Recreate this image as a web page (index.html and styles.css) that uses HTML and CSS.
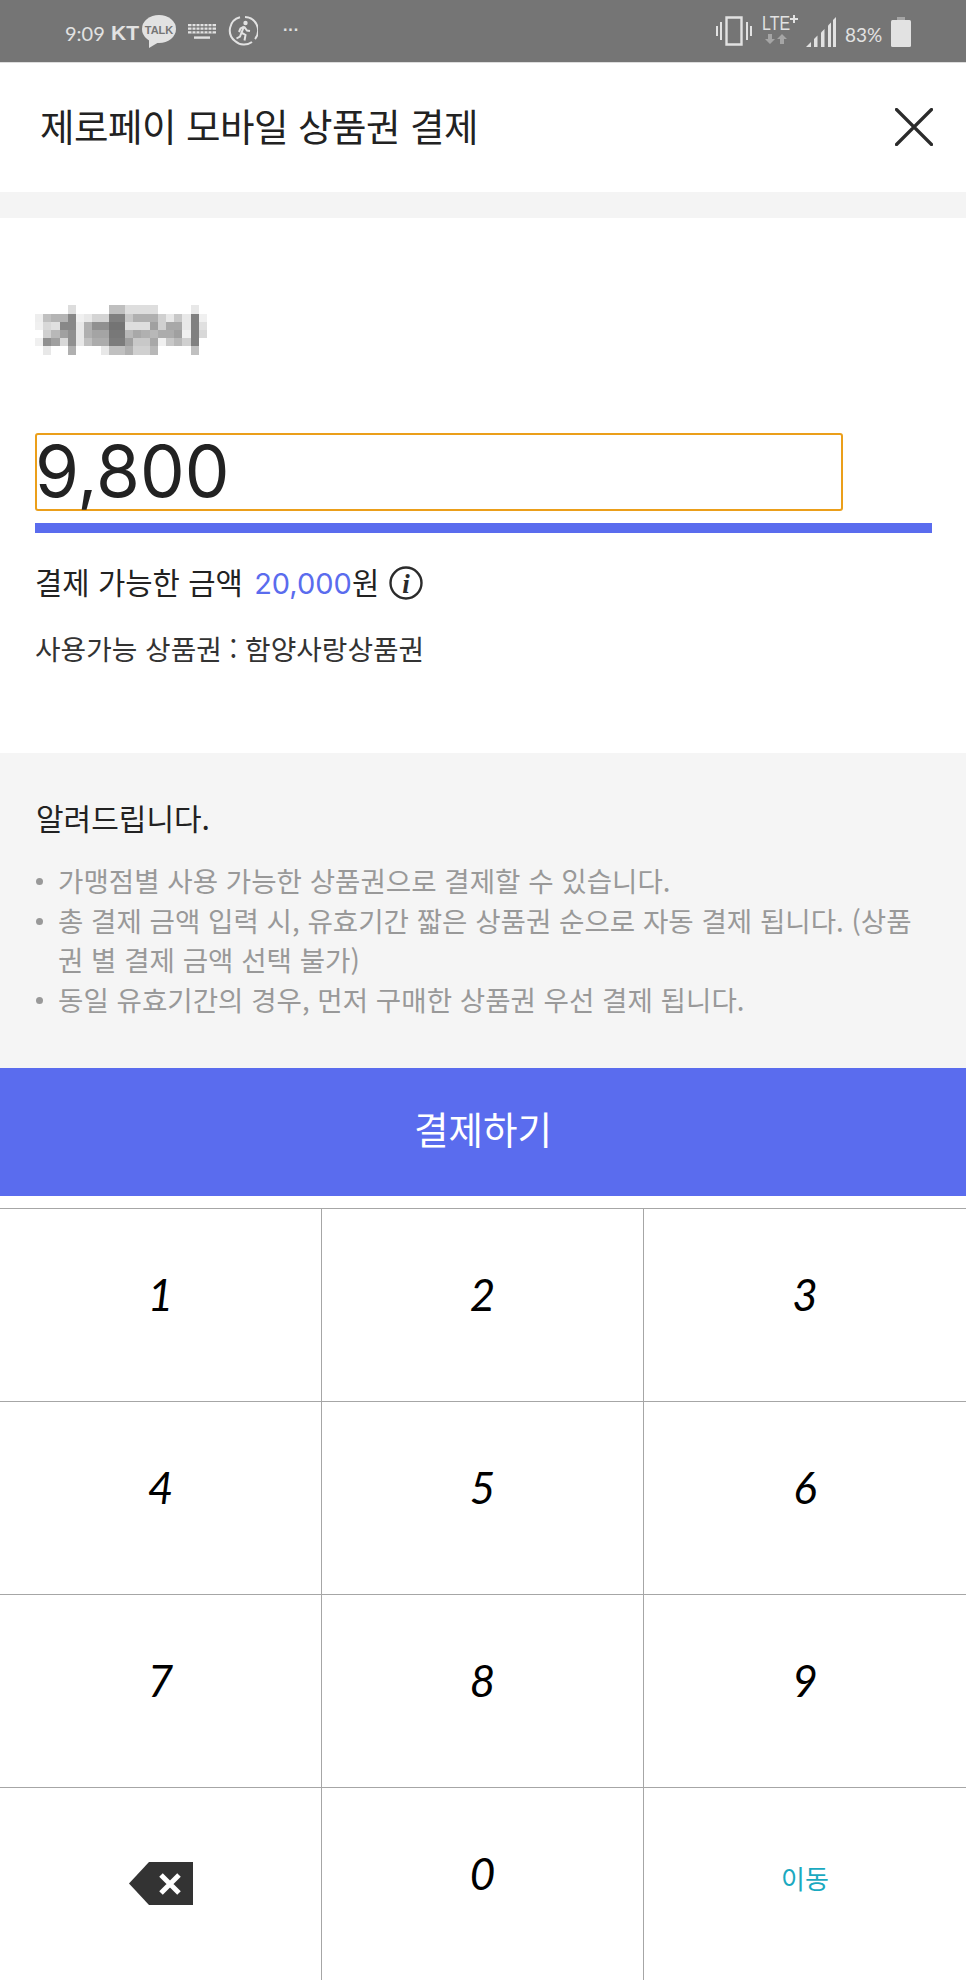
FILE: index.html
```html
<!DOCTYPE html>
<html lang="ko">

<head>
    <meta charset="utf-8" />
    <title>제로페이 모바일 상품권 결제</title>
    <link rel="stylesheet" href="styles.css">
</head>

<body>
    <div class="status-bar">
        <div class="status-left">
            <span class="status-time">9:09</span>
            <span class="status-carrier">KT</span>
            <svg class="icon-talk" width="34" height="33" viewBox="0 0 34 33">
                <ellipse cx="17" cy="14" rx="17" ry="14" fill="#e2e2e2" />
                <path d="M7 24 L7 33 L17 27 Z" fill="#e2e2e2" />
                <text x="17" y="19" text-anchor="middle" class="talk-text">TALK</text>
            </svg>
            <svg class="icon-keyboard" width="28" height="15" viewBox="0 0 28 15" fill="#e2e2e2">
                <path d="M0 0h28v2.2H0zM0 3.6h28v2.2H0zM0 7.2h28v2.2H0z" />
                <path d="M6 12.4h16v2.4H6z" />
                <path d="M3.5 0h1v9.4h-1zM7.5 0h1v9.4h-1zM11.5 0h1v9.4h-1zM15.5 0h1v9.4h-1zM19.5 0h1v9.4h-1zM23.5 0h1v9.4h-1z" fill="#757575" />
            </svg>
            <svg class="icon-run" width="30" height="31" viewBox="0 0 30 31" fill="none" stroke="#e2e2e2">
                <path d="M17 2 A13.5 13.5 0 0 1 27 24" stroke-width="2" />
                <path d="M24 27 A13.5 13.5 0 0 1 7 26 A13.5 13.5 0 0 1 12 2.3" stroke-width="2" />
                <circle cx="17.500" cy="8" r="2.200" fill="#e2e2e2" stroke="none" />
                <path d="M16 11.500 L13.500 17.500 L17.500 20 L16.500 25.500 M13.500 17.500 L12 21.500 L8.500 23.500 M16 11.500 L19 15.500 L22 16 M16 11.500 L12.500 13.500 L11 17" stroke-width="2" />
            </svg>
            <span class="status-dots">···</span>
        </div>
        <div class="status-right">
            <svg class="icon-vibrate" width="36" height="30" viewBox="0 0 36 30" fill="#e2e2e2">
                <path d="M10.5 1.5h15v27h-15z" fill="none" stroke="#e2e2e2" stroke-width="2.4" />
                <path d="M0 10h2v10H0zM4 6h2v18H4zM30 6h2v18h-2zM34 10h2v10h-2z" />
            </svg>
            <svg class="icon-lte" width="36" height="36" viewBox="0 0 36 36">
                <text x="0" y="20" class="lte-text" textLength="28" lengthAdjust="spacingAndGlyphs">LTE</text>
                <path d="M32 5v8M28 9h8" stroke="#e2e2e2" stroke-width="2" />
                <path d="M6 24h4v5h3l-5 5-5-5h3zM18 34v-5h-3l5-5 5 5h-3v5z" fill="#a5a5a5" />
            </svg>
            <svg class="icon-signal" width="30" height="30" viewBox="0 0 30 30" fill="#e2e2e2">
                <path d="M0 30 L5 25 V30 Z" />
                <path d="M8 22 L11.500 18.500 V30 H8 Z" />
                <path d="M15 15.500 L18.500 12 V30 H15 Z" />
                <path d="M22 8.500 L25 5.500 V30 H22 Z" />
                <path d="M27 3 L30 0 V30 H27 Z" />
            </svg>
            <span class="status-battery">83%</span>
            <svg class="icon-battery" width="20" height="30" viewBox="0 0 20 30">
                <path d="M6 0h8v3H6z" fill="#a5a5a5" />
                <rect x="0" y="3" width="20" height="27" rx="1.500" fill="#e2e2e2" />
            </svg>
        </div>
    </div>

    <div class="header">
        <h1>제로페이 모바일 상품권 결제</h1>
        <svg class="icon-close" width="38" height="38" viewBox="0 0 38 38" stroke="#2b2b2b" stroke-width="3.200" stroke-linecap="round">
            <path d="M1.500 1.500 L36.500 36.500 M36.500 1.500 L1.500 36.500" />
        </svg>
    </div>

    <div class="band"></div>

    <div class="pay-form">
        <!-- 가맹점 이름은 모자이크 처리됨 -->
        <svg class="store-mosaic" width="172" height="50" viewBox="0 0 21 6" shape-rendering="crispEdges">
            <g>
                <rect x="4" y="0" width="1" height="1" fill="#dddddd" />
                <rect x="9" y="0" width="2" height="1" fill="#bfbfbf" />
                <rect x="11" y="0" width="4" height="1" fill="#dedede" />
                <rect x="19" y="0" width="1" height="1" fill="#e8e8e8" />
            </g>
            <g>
                <rect x="0" y="1" width="1" height="1" fill="#eeeeee" />
                <rect x="1" y="1" width="1" height="1" fill="#c0c0c0" />
                <rect x="2" y="1" width="2" height="1" fill="#b4b4b4" />
                <rect x="4" y="1" width="1" height="1" fill="#888888" />
                <rect x="5" y="1" width="1" height="1" fill="#f0f0f0" />
                <rect x="6" y="1" width="1" height="1" fill="#e8e8e8" />
                <rect x="7" y="1" width="2" height="1" fill="#d4d4d4" />
                <rect x="9" y="1" width="2" height="1" fill="#808080" />
                <rect x="11" y="1" width="1" height="1" fill="#c8c8c8" />
                <rect x="12" y="1" width="3" height="1" fill="#b0b0b0" />
                <rect x="15" y="1" width="1" height="1" fill="#d0d0d0" />
                <rect x="16" y="1" width="1" height="1" fill="#e8e8e8" />
                <rect x="17" y="1" width="1" height="1" fill="#c8c8c8" />
                <rect x="18" y="1" width="1" height="1" fill="#e8e8e8" />
                <rect x="19" y="1" width="1" height="1" fill="#808080" />
                <rect x="20" y="1" width="1" height="1" fill="#f0f0f0" />
            </g>
            <g>
                <rect x="0" y="2" width="1" height="1" fill="#f0f0f0" />
                <rect x="1" y="2" width="1" height="1" fill="#d8d8d8" />
                <rect x="2" y="2" width="1" height="1" fill="#e0e0e0" />
                <rect x="3" y="2" width="2" height="1" fill="#888888" />
                <rect x="5" y="2" width="1" height="1" fill="#e8e8e8" />
                <rect x="6" y="2" width="1" height="1" fill="#b0b0b0" />
                <rect x="7" y="2" width="2" height="1" fill="#909090" />
                <rect x="9" y="2" width="2" height="1" fill="#747474" />
                <rect x="11" y="2" width="3" height="1" fill="#dedede" />
                <rect x="14" y="2" width="1" height="1" fill="#a0a0a0" />
                <rect x="15" y="2" width="1" height="1" fill="#d0d0d0" />
                <rect x="16" y="2" width="2" height="1" fill="#a8a8a8" />
                <rect x="18" y="2" width="1" height="1" fill="#e8e8e8" />
                <rect x="19" y="2" width="1" height="1" fill="#808080" />
                <rect x="20" y="2" width="1" height="1" fill="#e0e0e0" />
            </g>
            <g>
                <rect x="1" y="3" width="1" height="1" fill="#d0d0d0" />
                <rect x="2" y="3" width="1" height="1" fill="#b8b8b8" />
                <rect x="3" y="3" width="1" height="1" fill="#a0a0a0" />
                <rect x="4" y="3" width="1" height="1" fill="#909090" />
                <rect x="5" y="3" width="1" height="1" fill="#e8e8e8" />
                <rect x="6" y="3" width="1" height="1" fill="#b0b0b0" />
                <rect x="7" y="3" width="2" height="1" fill="#a4a4a4" />
                <rect x="9" y="3" width="2" height="1" fill="#787878" />
                <rect x="11" y="3" width="1" height="1" fill="#b8b8b8" />
                <rect x="12" y="3" width="1" height="1" fill="#a8a8a8" />
                <rect x="13" y="3" width="1" height="1" fill="#b0b0b0" />
                <rect x="14" y="3" width="1" height="1" fill="#b8b8b8" />
                <rect x="15" y="3" width="2" height="1" fill="#acacac" />
                <rect x="17" y="3" width="1" height="1" fill="#a0a0a0" />
                <rect x="18" y="3" width="1" height="1" fill="#f0f0f0" />
                <rect x="19" y="3" width="1" height="1" fill="#808080" />
                <rect x="20" y="3" width="1" height="1" fill="#d8d8d8" />
            </g>
            <g>
                <rect x="0" y="4" width="1" height="1" fill="#f0f0f0" />
                <rect x="1" y="4" width="1" height="1" fill="#909090" />
                <rect x="2" y="4" width="1" height="1" fill="#a0a0a0" />
                <rect x="3" y="4" width="1" height="1" fill="#d8d8d8" />
                <rect x="4" y="4" width="1" height="1" fill="#909090" />
                <rect x="5" y="4" width="1" height="1" fill="#e8e8e8" />
                <rect x="6" y="4" width="1" height="1" fill="#c0c0c0" />
                <rect x="7" y="4" width="2" height="1" fill="#acacac" />
                <rect x="9" y="4" width="2" height="1" fill="#7c7c7c" />
                <rect x="11" y="4" width="1" height="1" fill="#a0a0a0" />
                <rect x="12" y="4" width="2" height="1" fill="#c8c8c8" />
                <rect x="14" y="4" width="1" height="1" fill="#a8a8a8" />
                <rect x="15" y="4" width="1" height="1" fill="#f0f0f0" />
                <rect x="16" y="4" width="1" height="1" fill="#c8c8c8" />
                <rect x="17" y="4" width="1" height="1" fill="#b8b8b8" />
                <rect x="18" y="4" width="1" height="1" fill="#d0d0d0" />
                <rect x="19" y="4" width="1" height="1" fill="#808080" />
            </g>
            <g>
                <rect x="1" y="5" width="1" height="1" fill="#e8e8e8" />
                <rect x="4" y="5" width="1" height="1" fill="#b0b0b0" />
                <rect x="8" y="5" width="1" height="1" fill="#e8e8e8" />
                <rect x="9" y="5" width="2" height="1" fill="#c0c0c0" />
                <rect x="11" y="5" width="1" height="1" fill="#b0b0b0" />
                <rect x="12" y="5" width="2" height="1" fill="#d0d0d0" />
                <rect x="14" y="5" width="1" height="1" fill="#b8b8b8" />
                <rect x="19" y="5" width="1" height="1" fill="#c0c0c0" />
            </g>
        </svg>

        <div class="amount-box">9,800</div>
        <div class="amount-line"></div>

        <div class="limit-row">
            <span>결제 가능한 금액 <span class="limit-num">20,000</span>원</span>
            <svg class="icon-info" width="34" height="34" viewBox="0 0 34 34">
                <circle cx="17" cy="17" r="15.500" fill="none" stroke="#2b2b2b" stroke-width="2.400" />
                <text x="17" y="27" text-anchor="middle" class="info-text">i</text>
            </svg>
        </div>
        <div class="usable">사용가능 상품권 : 함양사랑상품권</div>
    </div>

    <div class="notice">
        <h2>알려드립니다.</h2>
        <ul>
            <li>가맹점별 사용 가능한 상품권으로 결제할 수 있습니다.</li>
            <li>총 결제 금액 입력 시, 유효기간 짧은 상품권 순으로 자동 결제 됩니다. (상품권 별 결제 금액 선택 불가)</li>
            <li>동일 유효기간의 경우, 먼저 구매한 상품권 우선 결제 됩니다.</li>
        </ul>
    </div>

    <div class="pay-btn">결제하기</div>

    <div class="keypad">
        <div class="key">1</div>
        <div class="key">2</div>
        <div class="key">3</div>
        <div class="key">4</div>
        <div class="key">5</div>
        <div class="key">6</div>
        <div class="key">7</div>
        <div class="key">8</div>
        <div class="key">9</div>
        <div class="key key-back">
            <svg width="64" height="44" viewBox="0 0 64 44">
                <path d="M0 21.500 L20 0 H64 V43 H20 Z" fill="#333333" />
                <path d="M32 13 L50 31 M50 13 L32 31" stroke="#ffffff" stroke-width="5" />
            </svg>
        </div>
        <div class="key">0</div>
        <div class="key key-move">이동</div>
    </div>
</body>

</html>
```

FILE: styles.css
```css
* {
    box-sizing: border-box;
}

body {
    margin: 0;
    width: 966px;
    background-color: #fff;
    color: #222;
    font-family: "Noto Sans CJK KR", "Noto Sans", sans-serif;
}

h1,
h2,
ul {
    margin: 0;
    padding: 0;
    font-weight: 400;
}

/* status bar */
.status-bar {
    height: 63px;
    display: flex;
    justify-content: space-between;
    padding: 15px 55px 0 65px;
    background-color: #757575;
    border-bottom: 1px solid #ddd;
    color: #e2e2e2;
}

.status-left,
.status-right {
    display: flex;
    align-items: flex-start;
}

.status-time {
    width: 46px;
    margin-top: 6px;
    font: 400 20px/24px "Lato", sans-serif;
}

.status-carrier {
    width: 31px;
    margin-top: 6px;
    font: 700 21px/24px "Liberation Sans", sans-serif;
}

.icon-keyboard {
    margin: 9px 12px 0 12px;
}

.status-dots {
    margin-left: 25px;
    font: 700 16px/30px "Liberation Sans", sans-serif;
}

.talk-text {
    font: 700 11px "Liberation Sans", sans-serif;
    fill: #757575;
}

.lte-text {
    font: 400 20px "Liberation Sans", sans-serif;
    fill: #e2e2e2;
}

.icon-vibrate {
    margin: 1px 10px 0 0;
}

.icon-lte {
    margin: -5px 8px 0 0;
}

.icon-signal {
    margin: 2px 9px 0 0;
}

.status-battery {
    width: 46px;
    margin-top: 8px;
    font: 400 19px/24px "Lato", sans-serif;
}

.icon-battery {
    margin-top: 2px;
}

/* header */
.header {
    height: 129px;
    display: flex;
    justify-content: space-between;
    align-items: center;
    padding: 0 33px 2px 40px;
}

.header h1 {
    margin-bottom: 4px;
    font-size: 37.5px;
    letter-spacing: -0.5px;
    color: #222;
}

.band {
    height: 26px;
    background-color: #f4f4f4;
}

/* form */
.pay-form {
    height: 535px;
    padding: 87px 34px 0 35px;
}

.store-mosaic {
    display: block;
    filter: blur(0.7px);
}

.amount-box {
    width: 808px;
    height: 78px;
    margin-top: 78px;
    border: 2px solid #eb9f1a;
    border-radius: 3px;
    text-indent: -2px;
    font: 400 71px/72px "Inter", sans-serif;
    color: #222;
}

.amount-line {
    height: 10px;
    margin-top: 12px;
    background-color: #5a6cee;
}

.limit-row {
    display: flex;
    align-items: center;
    margin-top: 31px;
    font-size: 29.7px;
    line-height: 36px;
}

.limit-num {
    margin-left: 3px;
    color: #5a6cee;
    font-family: "Inter", sans-serif;
    font-size: 29px;
}

.icon-info {
    margin-left: 10px;
}

.info-text {
    font: italic 700 27px "Liberation Serif", serif;
    fill: #2b2b2b;
}

.usable {
    margin-top: 29px;
    font-size: 27.8px;
    line-height: 34px;
    color: #333;
}

/* notice */
.notice {
    height: 315px;
    padding: 44px 36px 0 36px;
    background-color: #f5f5f5;
}

.notice h2 {
    font-size: 30px;
    line-height: 40px;
    color: #222;
}

.notice ul {
    list-style: none;
    margin-top: 24px;
}

.notice li {
    position: relative;
    padding-left: 22px;
    font-size: 27.6px;
    line-height: 39.5px;
    color: #999;
    word-break: break-all;
}

.notice li::before {
    content: "";
    position: absolute;
    left: 0;
    top: 17px;
    width: 7px;
    height: 7px;
    border-radius: 50%;
    background-color: #999;
}

/* button */
.pay-btn {
    height: 128px;
    display: flex;
    justify-content: center;
    align-items: center;
    padding-bottom: 10px;
    background-color: #5a6cee;
    color: #fff;
    font-size: 37.5px;
}

/* keypad */
.keypad {
    display: grid;
    grid-template-columns: repeat(3, 322px);
    grid-auto-rows: 193px;
    margin-top: 12px;
    border-top: 1px solid #a6a6a6;
}

.key {
    display: flex;
    justify-content: center;
    align-items: center;
    padding-bottom: 22px;
    border-right: 1px solid #a6a6a6;
    border-bottom: 1px solid #a6a6a6;
    font: italic 400 44px/44px "Lato", sans-serif;
    color: #000;
}

.key:nth-child(3n) {
    border-right: 0;
}

.key-back {
    padding: 0;
}

.key-move {
    padding-bottom: 12px;
    font: 400 26px/34px "Noto Sans CJK KR", sans-serif;
    color: #1aa9c0;
}
```
